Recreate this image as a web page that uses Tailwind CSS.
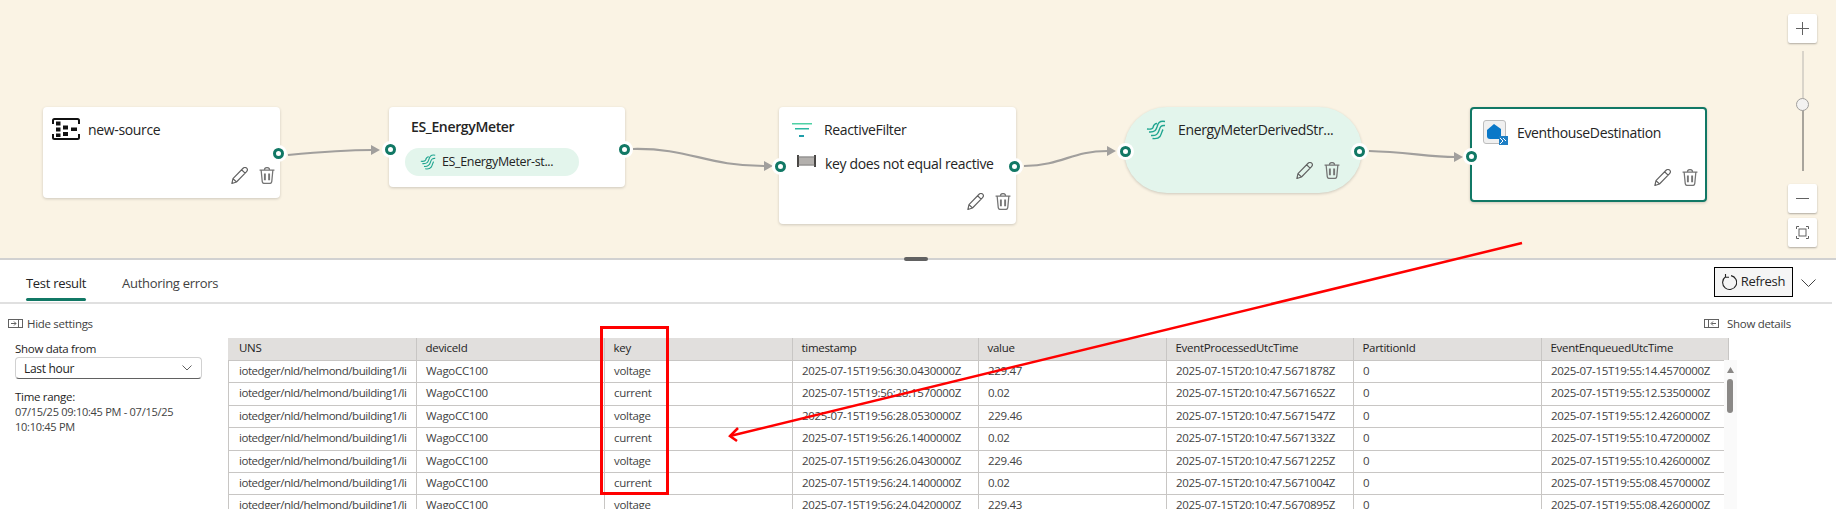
<!DOCTYPE html>
<html lang="en">
<head>
    <meta charset="UTF-8">
    <title>Test result</title>
    <script src="https://cdn.jsdelivr.net/npm/@tailwindcss/browser@4"></script>
</head>
<body class="bg-white font-['Open_Sans',sans-serif] text-[#242424]">
    <svg class="hidden">
        <symbol id="pencil" viewBox="1 .5 15.500 16"><path d="M1.600 16 2.600 11.400 11.900 1.900C13 .8 14.600.7 15.500 1.600 16.400 2.500 16.300 4 15.200 5.100L5.900 14.600 1.600 16ZM2.600 11.400 5.900 14.600M10.700 3.100 14 6.300" fill="none" stroke="#616161" stroke-width="1.100" stroke-linejoin="round"/></symbol>
        <symbol id="trash" viewBox=".5 .5 15 16"><path d="M1 3.500H15M5.500 3.300C5.500 1.900 6.500 1 8 1S10.500 1.900 10.500 3.300M2.500 3.500 3.500 14C3.600 15.200 4.500 16 5.600 16H10.400C11.500 16 12.400 15.200 12.500 14L13.500 3.500" fill="none" stroke="#757575" stroke-width="1.200"/><path d="M6 6.500V13M10 6.500V13" stroke="#757575" stroke-width="1.800"/></symbol>
        <symbol id="stream" viewBox="0 0 20 20"><path d="M19 1.500C13 .5 12 3.500 11 7 10 10 9 12.500 3 12M19 5.500C14.500 5 14 7.500 13 10.500 12 14 10.500 16 5 15.500M17 9.500C16 11 15.500 14 14 16.500 12.500 18.500 10 19 6.500 18.500M11 3.500C8 3.500 7.500 5.500 7 7.500 6.500 9 5 9.500 1 9" fill="none" stroke="#1fa590" stroke-width="1.400"/></symbol>
    </svg>

    <div class="relative w-[1836px] h-[509px] overflow-hidden">
        <!-- canvas -->
        <section class="relative h-[258px] bg-[#faf3e4] text-[14px]">
            <svg class="absolute inset-0" width="1836" height="258" fill="none" stroke="#a19f9d" stroke-width="2.200">
                <path d="M288 155C320 152 345 150 372 150"/>
                <path d="M633 149C690 148 705 166 765 166"/>
                <path d="M1024 166C1065 165 1070 151 1108 151"/>
                <path d="M1369 151C1405 152 1430 157 1455 157"/>
                <path d="M371 145 380 150 371 155Z" fill="#a19f9d" stroke="none"/>
                <path d="M764 161 773 166 764 171Z" fill="#a19f9d" stroke="none"/>
                <path d="M1107 146 1116 151 1107 156Z" fill="#a19f9d" stroke="none"/>
                <path d="M1454 152 1463 157 1454 162Z" fill="#a19f9d" stroke="none"/>
            </svg>

            <!-- new-source -->
            <div class="absolute left-[43px] top-[107px] w-[237px] h-[91px] bg-white rounded shadow-[0_1px_3px_rgba(0,0,0,0.18)]">
                <div class="flex items-center pl-[9px] pt-[11px] gap-[8px]">
                    <svg width="28" height="22" viewBox="0 0 28 22" fill="#111">
                        <path d="M1 6V2.500Q1 1 2.500 1H25.500Q27 1 27 2.500V6M1 16V19.500Q1 21 2.500 21H25.500Q27 21 27 19.500V16" fill="none" stroke="#111" stroke-width="2"/>
                        <rect x="4" y="3.500" width="4.500" height="4"/><rect x="4" y="9.500" width="4.500" height="4"/><rect x="4" y="15.500" width="4.500" height="3.500"/><rect x="11" y="7.500" width="5" height="4"/><rect x="11" y="14" width="5" height="4"/><rect x="19" y="9.500" width="6" height="3.500"/>
                    </svg>
                    <span class="tracking-[-0.35px]">new-source</span>
                </div>
                <svg class="absolute left-[188px] top-[60px]" width="17" height="17"><use href="#pencil"/></svg>
                <svg class="absolute left-[216px] top-[60px]" width="16" height="17"><use href="#trash"/></svg>
                <span class="absolute left-[227px] top-[38px] size-[17px] rounded-full bg-white p-[3px]"><span class="block size-full rounded-full border-[3px] border-[#117865]"></span></span>
            </div>

            <!-- ES_EnergyMeter -->
            <div class="absolute left-[389px] top-[107px] w-[236px] h-[80px] bg-white rounded shadow-[0_1px_3px_rgba(0,0,0,0.18)]">
                <div class="pl-[22px] pt-[9px] font-semibold tracking-[-0.35px] leading-[22px]">ES_EnergyMeter</div>
                <div class="absolute left-[16px] top-[41px] w-[174px] h-[28px] rounded-full bg-[#e3f5ec] flex items-center pl-[15px] gap-[6px] text-[12.500px] tracking-[-0.35px]">
                    <svg width="16" height="18"><use href="#stream"/></svg>
                    <span>ES_EnergyMeter-st...</span>
                </div>
                <span class="absolute left-[-7px] top-[34px] size-[17px] rounded-full bg-white p-[3px]"><span class="block size-full rounded-full border-[3px] border-[#117865]"></span></span>
                <span class="absolute left-[227px] top-[34px] size-[17px] rounded-full bg-white p-[3px]"><span class="block size-full rounded-full border-[3px] border-[#117865]"></span></span>
            </div>

            <!-- ReactiveFilter -->
            <div class="absolute left-[779px] top-[107px] w-[237px] h-[117px] bg-white rounded shadow-[0_1px_3px_rgba(0,0,0,0.18)]">
                <div class="flex items-center pl-[13px] pt-[12px] gap-[12px]">
                    <svg width="20" height="15" viewBox="0 0 20 15">
                        <rect y="0" width="20" height="1.500" fill="#4fd1a5"/><rect x="3" y="5" width="14" height="1.500" fill="#2ab7a1"/><rect x="7" y="12" width="5" height="2" fill="#1f9eaa"/>
                    </svg>
                    <span class="tracking-[-0.35px] leading-[22px]">ReactiveFilter</span>
                </div>
                <div class="flex items-center pl-[18px] pt-[12px] gap-[9px]">
                    <svg class="mb-[5px]" width="19" height="12" viewBox="0 0 19 12">
                        <rect x="2" y="2.500" width="15" height="7" fill="#b3b0ad"/>
                        <path d="M1 0V12M18 0V12" stroke="#484644" stroke-width="2" fill="none"/>
                        <path d="M1 2H18M1 10H18" stroke="#605e5c" stroke-width="1" fill="none"/>
                    </svg>
                    <span class="tracking-[-0.35px] whitespace-nowrap">key does not equal reactive</span>
                </div>
                <svg class="absolute left-[188px] top-[86px]" width="17" height="17"><use href="#pencil"/></svg>
                <svg class="absolute left-[216px] top-[86px]" width="16" height="17"><use href="#trash"/></svg>
                <span class="absolute left-[-7px] top-[51px] size-[17px] rounded-full bg-white p-[3px]"><span class="block size-full rounded-full border-[3px] border-[#117865]"></span></span>
                <span class="absolute left-[227px] top-[51px] size-[17px] rounded-full bg-white p-[3px]"><span class="block size-full rounded-full border-[3px] border-[#117865]"></span></span>
            </div>

            <!-- EnergyMeterDerivedStream -->
            <div class="absolute left-[1124px] top-[107px] w-[238px] h-[86px] bg-[#e3f5ec] rounded-[43px] shadow-[0_1px_3px_rgba(0,0,0,0.18)]">
                <div class="flex items-center pl-[22px] pt-[12px] gap-[12px]">
                    <svg width="20" height="20"><use href="#stream"/></svg>
                    <span class="tracking-[-0.35px] whitespace-nowrap">EnergyMeterDerivedStr...</span>
                </div>
                <svg class="absolute left-[172px] top-[55px]" width="17" height="17"><use href="#pencil"/></svg>
                <svg class="absolute left-[200px] top-[55px]" width="16" height="17"><use href="#trash"/></svg>
                <span class="absolute left-[-7px] top-[36px] size-[17px] rounded-full bg-white p-[3px]"><span class="block size-full rounded-full border-[3px] border-[#117865]"></span></span>
                <span class="absolute left-[227px] top-[36px] size-[17px] rounded-full bg-white p-[3px]"><span class="block size-full rounded-full border-[3px] border-[#117865]"></span></span>
            </div>

            <!-- EventhouseDestination -->
            <div class="absolute left-[1470px] top-[107px] w-[237px] h-[95px] bg-white rounded border-2 border-[#117865] shadow-[0_1px_3px_rgba(0,0,0,0.18)]">
                <div class="flex items-center pl-[11px] pt-[11px] gap-[9px]">
                    <svg width="25" height="25" viewBox="0 0 25 25">
                        <rect x=".5" y=".5" width="22" height="23" rx="2.500" fill="#f0f0f0" stroke="#bdbdbd"/>
                        <path d="M4 10 11 4 18 9V19H7C5 19 4 18 4 16Z" fill="#0a78c8"/>
                        <rect x="16" y="16" width="9" height="9" fill="#1f7fc4"/>
                        <path d="M17 18 20 21 17 24M20 18 23 21" stroke="#fff" stroke-width="1" fill="none"/>
                    </svg>
                    <span class="tracking-[-0.35px] whitespace-nowrap">EventhouseDestination</span>
                </div>
                <svg class="absolute left-[182px] top-[60px]" width="17" height="17"><use href="#pencil"/></svg>
                <svg class="absolute left-[210px] top-[60px]" width="16" height="17"><use href="#trash"/></svg>
                <span class="absolute left-[-9px] top-[39px] size-[17px] rounded-full bg-white p-[3px]"><span class="block size-full rounded-full border-[3px] border-[#117865]"></span></span>
            </div>

            <!-- zoom controls -->
            <div class="absolute left-[1788px] top-[14px] w-[29px] flex flex-col items-center">
                <button class="size-[29px] bg-white rounded-[2px] shadow-[0_1px_2px_rgba(0,0,0,0.3)] flex items-center justify-center">
                    <svg width="13" height="13" stroke="#616161"><path d="M6.500 0V13M0 6.500H13"/></svg>
                </button>
                <div class="relative w-[2px] h-[120px] mt-[8px] bg-[#a8a49c]">
                    <div class="h-[53px] bg-[#d9d4ca]"></div>
                    <span class="absolute left-[-5.500px] top-[47px] size-[13px] rounded-full bg-[#f3f2f1] border border-[#a19f9d]"></span>
                </div>
                <button class="size-[29px] mt-[13px] bg-white rounded-[2px] shadow-[0_1px_2px_rgba(0,0,0,0.3)] flex items-center justify-center">
                    <svg width="13" height="1" stroke="#616161"><path d="M0 .5H13"/></svg>
                </button>
                <button class="size-[29px] mt-[5px] bg-white rounded-[2px] shadow-[0_1px_2px_rgba(0,0,0,0.3)] flex items-center justify-center">
                    <svg width="13" height="13" fill="none" stroke="#616161"><rect x="3" y="3" width="7" height="7"/><path d="M.5 3V.5H3M10 .5H12.500V3M.5 10V12.500H3M10 12.500H12.500V10"/></svg>
                </button>
            </div>
        </section>

        <!-- splitter -->
        <div class="relative h-[2px] bg-[#d1d1d1]">
            <span class="absolute left-[904px] top-[-1px] w-[24px] h-[4px] rounded-full bg-[#616161]"></span>
        </div>

        <!-- tabs -->
        <div class="flex items-stretch justify-between h-[44px] border-b-2 border-[#e0e0e0] w-[1832px]">
            <div class="flex pl-[26px] gap-[36px] text-[13px] tracking-[-0.3px]">
                <div class="relative pt-[14px]">Test result<span class="absolute left-0 right-0 bottom-[1px] h-[3px] rounded-sm bg-[#117865]"></span></div>
                <div class="pt-[14px] text-[#424242]">Authoring errors</div>
            </div>
            <div class="flex items-start pt-[7px] pr-[16px] gap-[8px]">
                <button class="w-[79px] h-[30px] bg-[#f5f5f5] border-[1.500px] border-black flex items-center justify-center gap-[4px] text-[13px] tracking-[-0.3px]">
                    <svg width="15" height="19" viewBox="0 0 15 19" fill="none" stroke="#242424" stroke-width="1.100"><path d="M3.500 3.800A7 7 0 1 0 9 2.600M3.500 1V4.200H7"/></svg>
                    Refresh
                </button>
                <svg class="mt-[12px]" width="15" height="8" fill="none" stroke="#424242"><path d="M.5.5 7.500 7.500 14.500.5"/></svg>
            </div>
        </div>

        <div class="flex">
            <!-- settings -->
            <aside class="w-[228px] text-[11.500px] tracking-[-0.3px] leading-[15px]">
                <div class="flex items-center gap-[4px] pl-[8px] h-[18px] mt-[10px] text-[#424242]">
                    <svg width="15" height="9" fill="none" stroke="#616161"><rect x=".5" y=".5" width="14" height="8"/><path d="M10.500 .5V8.500" /><path d="M3 4.500H8M6 2.500 8 4.500 6 6.500" /></svg>
                    Hide settings
                </div>
                <div class="pl-[15px] mt-[9px]">
                    <div class="h-[16px]">Show data from</div>
                    <div class="w-[187px] h-[22px] border border-[#d1d1d1] border-b-[#616161] rounded flex items-center justify-between pl-[8px] pr-[9px] text-[12px]">
                        Last hour
                        <svg width="10" height="6" fill="none" stroke="#616161"><path d="M.5.5 5 5 9.500.5"/></svg>
                    </div>
                    <div class="mt-[10px]">Time range:</div>
                    <div class="w-[190px] text-[11px] tracking-[-0.27px] text-[#424242]">07/15/25 09:10:45 PM - 07/15/25 10:10:45 PM</div>
                </div>
            </aside>

            <!-- results -->
            <main class="w-[1500px] text-[11.500px] tracking-[-0.3px]">
                <div class="relative h-[34px]">
                    <div class="absolute left-[1476px] top-[11px] flex items-center gap-[8px] text-[11.500px] text-[#424242] whitespace-nowrap">
                        <svg width="15" height="9" fill="none" stroke="#616161"><rect x=".5" y=".5" width="14" height="8"/><path d="M4.500 .5V8.500"/><path d="M12 4.500H7.500M9 2.500 7 4.500 9 6.500"/></svg>
                        Show details
                    </div>
                </div>
                <table class="table-fixed w-[1500px] h-[22px] bg-[#e1dfdd] text-left [&_th]:font-normal [&_th]:pl-[9px] [&_th]:pb-[2px] [&_th:first-child]:pl-[11px] [&_th]:border-r [&_th]:border-[#c8c6c4] [&_th]:text-[#242424]">
                    <colgroup><col class="w-[188px]"><col class="w-[188px]"><col class="w-[188px]"><col class="w-[186px]"><col class="w-[188px]"><col class="w-[187px]"><col class="w-[188px]"><col class="w-[187px]"></colgroup>
                    <tr><th>UNS</th><th>deviceId</th><th>key</th><th>timestamp</th><th>value</th><th>EventProcessedUtcTime</th><th>PartitionId</th><th>EventEnqueuedUtcTime</th></tr>
                </table>
                <div class="relative">
                    <table class="table-fixed w-[1496px] border-collapse text-[#424242] [&_td]:h-[22.400px] [&_td]:pl-[9px] [&_td]:pb-[2px] [&_td:first-child]:pl-[10px] [&_td:first-child]:tracking-[-0.45px] [&_td]:border [&_td]:border-[#c8c6c4] [&_td]:whitespace-nowrap [&_td]:overflow-hidden">
                        <colgroup><col class="w-[188px]"><col class="w-[188px]"><col class="w-[188px]"><col class="w-[186px]"><col class="w-[188px]"><col class="w-[187px]"><col class="w-[188px]"><col class="w-[183px]"></colgroup>
                        <tr><td>iotedger/nld/helmond/building1/li</td><td>WagoCC100</td><td>voltage</td><td>2025-07-15T19:56:30.0430000Z</td><td>229.47</td><td>2025-07-15T20:10:47.5671878Z</td><td>0</td><td>2025-07-15T19:55:14.4570000Z</td></tr>
                        <tr><td>iotedger/nld/helmond/building1/li</td><td>WagoCC100</td><td>current</td><td>2025-07-15T19:56:28.1570000Z</td><td>0.02</td><td>2025-07-15T20:10:47.5671652Z</td><td>0</td><td>2025-07-15T19:55:12.5350000Z</td></tr>
                        <tr><td>iotedger/nld/helmond/building1/li</td><td>WagoCC100</td><td>voltage</td><td>2025-07-15T19:56:28.0530000Z</td><td>229.46</td><td>2025-07-15T20:10:47.5671547Z</td><td>0</td><td>2025-07-15T19:55:12.4260000Z</td></tr>
                        <tr><td>iotedger/nld/helmond/building1/li</td><td>WagoCC100</td><td>current</td><td>2025-07-15T19:56:26.1400000Z</td><td>0.02</td><td>2025-07-15T20:10:47.5671332Z</td><td>0</td><td>2025-07-15T19:55:10.4720000Z</td></tr>
                        <tr><td>iotedger/nld/helmond/building1/li</td><td>WagoCC100</td><td>voltage</td><td>2025-07-15T19:56:26.0430000Z</td><td>229.46</td><td>2025-07-15T20:10:47.5671225Z</td><td>0</td><td>2025-07-15T19:55:10.4260000Z</td></tr>
                        <tr><td>iotedger/nld/helmond/building1/li</td><td>WagoCC100</td><td>current</td><td>2025-07-15T19:56:24.1400000Z</td><td>0.02</td><td>2025-07-15T20:10:47.5671004Z</td><td>0</td><td>2025-07-15T19:55:08.4570000Z</td></tr>
                        <tr><td>iotedger/nld/helmond/building1/li</td><td>WagoCC100</td><td>voltage</td><td>2025-07-15T19:56:24.0420000Z</td><td>229.43</td><td>2025-07-15T20:10:47.5670895Z</td><td>0</td><td>2025-07-15T19:55:08.4260000Z</td></tr>
                    </table>
                    <!-- scrollbar -->
                    <div class="absolute left-[1496px] top-0 w-[13px] h-[150px] bg-[#fafafa]">
                        <svg class="absolute left-[3px] top-[7px]" width="7" height="6" fill="#8a8886"><path d="M3.500 0 7 6H0Z"/></svg>
                        <span class="absolute left-[3px] top-[19px] w-[6px] h-[34px] rounded-full bg-[#8a8886]"></span>
                    </div>
                </div>
            </main>
        </div>

        <!-- red annotations -->
        <div class="absolute left-[600px] top-[326px] w-[69px] h-[169px] border-[3px] border-[#ff0000]"></div>
        <svg class="absolute inset-0 pointer-events-none" width="1836" height="509" fill="none" stroke="#ff0000" stroke-width="2.500">
            <path d="M1522 243 730 436"/>
            <path d="M738 428 730 436 737 441"/>
        </svg>
    </div>
</body>
</html>
